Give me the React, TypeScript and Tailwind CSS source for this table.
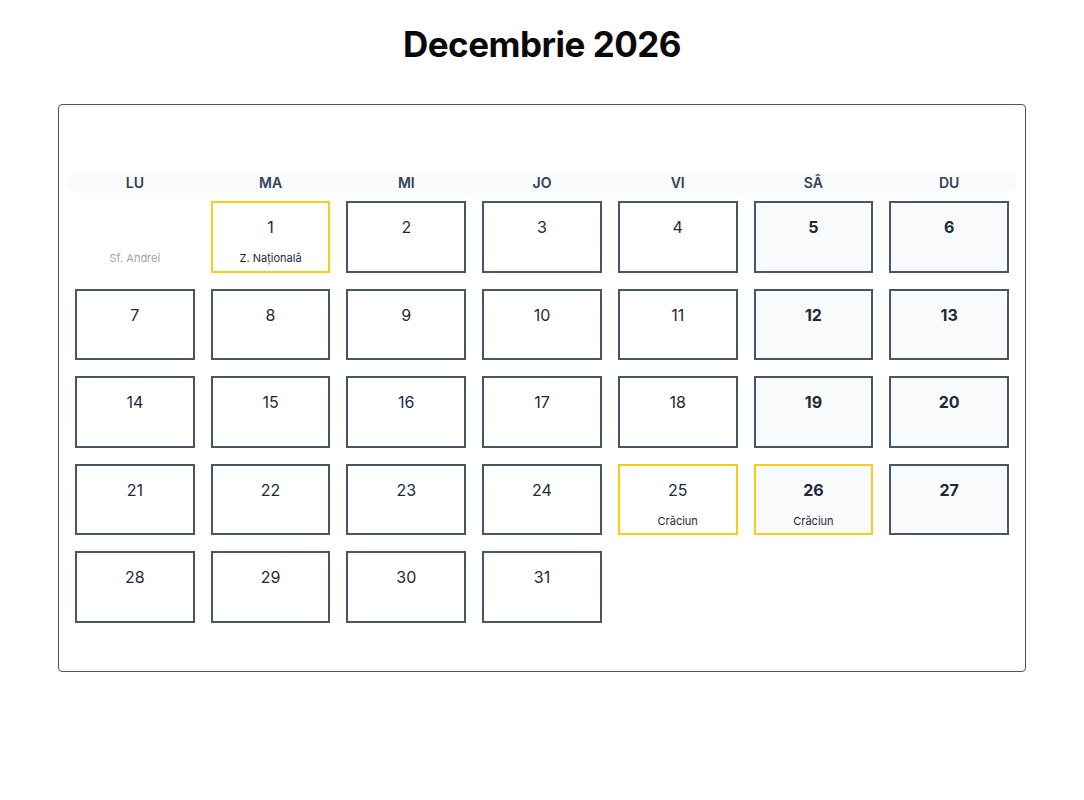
import React from "react";

type Cell = {
  day?: number;
  label?: string;
  outside?: boolean;
  holiday?: boolean;
  weekend?: boolean;
};

const weekdays = ["LU", "MA", "MI", "JO", "VI", "SÂ", "DU"];

function buildCells(): Cell[] {
  const cells: Cell[] = [{ outside: true, label: "Sf. Andrei" }];
  const labels: Record<number, string> = { 1: "Z. Națională", 25: "Crăciun", 26: "Crăciun" };
  for (let d = 1; d <= 31; d++) {
    const idx = cells.length % 7;
    cells.push({
      day: d,
      label: labels[d],
      holiday: !!labels[d],
      weekend: idx === 5 || idx === 6,
    });
  }
  return cells;
}

export default function App() {
  const cells = buildCells();
  return (
    <div
      className="min-h-[800px] w-[1084px] bg-white px-[58px] pt-[26px]"
      style={{ fontFamily: "Inter, 'Noto Sans', sans-serif" }}
    >
      <h1 className="text-center text-[35px] font-bold leading-[36px] tracking-[-0.5px] text-[#0a0a0a]">
        Decembrie 2026
      </h1>
      <div className="mt-[42px] rounded-[4px] border border-[#475569] px-2 pb-[48px] pt-[68px]">
        <div className="grid h-5 grid-cols-7 gap-x-4 rounded-full bg-[#f8fafc] px-2">
          {weekdays.map((w) => (
            <div key={w} className="text-center text-[14px] font-semibold leading-5 text-[#334155]">
              {w}
            </div>
          ))}
        </div>
        <div className="mt-2 grid grid-cols-7 gap-x-4 gap-y-[16px] px-2">
          {cells.map((c, i) => {
            if (c.outside) {
              return (
                <div key={i} className="flex h-[71.5px] flex-col items-center border-2 border-transparent pt-3">
                  <div className="h-6" />
                  <div className="mt-[11px] text-[11px] leading-4 text-[#9ca3af]">{c.label}</div>
                </div>
              );
            }
            const border = c.holiday ? "border-[#facc15]" : "border-[#475569]";
            const bg = c.weekend ? "bg-[#f8fafc]" : "bg-white";
            const weight = c.weekend ? "font-bold" : "font-normal";
            return (
              <div
                key={i}
                className={`flex h-[71.5px] flex-col items-center border-2 pt-3 ${border} ${bg}`}
              >
                <div className={`text-[16px] leading-6 text-[#1e293b] ${weight}`}>{c.day}</div>
                {c.label && (
                  <div className="mt-[11px] text-[11px] leading-4 text-[#1e293b]">{c.label}</div>
                )}
              </div>
            );
          })}
        </div>
      </div>
    </div>
  );
}
